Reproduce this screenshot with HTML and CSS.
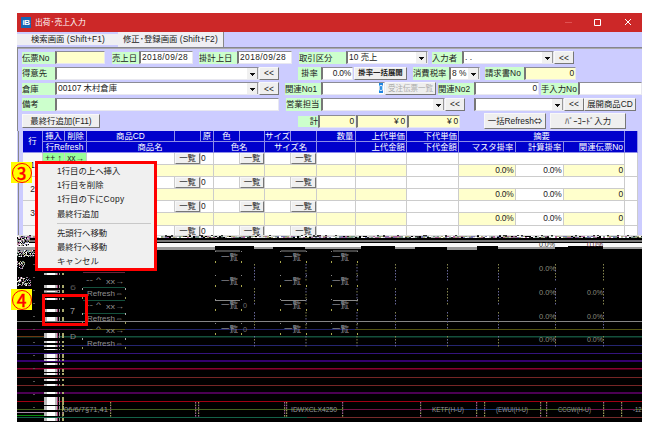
FILE: index.html
```html
<!DOCTYPE html>
<html lang="ja">
<head>
<meta charset="utf-8">
<title>出荷･売上入力</title>
<link rel="stylesheet" href="styles.css">
</head>
<body>
<main class="window">
  <header class="titlebar">
    <span class="logo">iB</span><span class="title">出荷･売上入力</span>
    <svg class="controls" width="72" height="19" viewBox="0 0 72 19"><path d="M0 9.5h7" stroke="#e05252"/><path d="M29.5 6.5h6v6h-6zM60 6l6 6M66 6l-6 6" fill="none" stroke="#fff"/></svg>
  </header>
  <nav class="tabs"><span class="tab">検索画面 <i>(Shift+F1)</i></span><span class="tab active">修正･登録画面 <i>(Shift+F2)</i></span></nav>
  <section class="form">
    <div class="row r1">
      <label>伝票No</label><b class="field yellow"></b><label>売上日</label><b class="field date">2018/09/28</b><label>掛計上日</label><b class="field date">2018/09/28</b><label>取引区分</label><b class="field select">10 売上</b><label>入力者</label><b class="field select">. .</b><button>&lt;&lt;</button>
    </div>
    <div class="row r2">
      <label>得意先</label><b class="field select"></b><button>&lt;&lt;</button><label>掛率</label><b class="field num">0.0%</b><button class="tiny">掛率一括展開</button><label>消費税率</label><b class="field select">8 %</b><label>請求書No</label><b class="field yellow num">0</b>
    </div>
    <div class="row r3">
      <label>倉庫</label><b class="field select">00107 木村倉庫</b><button>&lt;&lt;</button><label>関連No1</label><b class="field num"><mark>0</mark></b><button class="disabled">受注伝票一覧</button><label>関連No2</label><b class="field num">0</b><label>手入力No</label><b class="field"></b>
    </div>
    <div class="row r4">
      <label>備考</label><b class="field"></b><label>営業担当</label><b class="field select"></b><button>&lt;&lt;</button><b class="field select"></b><button>&lt;&lt;</button><button>展開商品CD</button>
    </div>
    <div class="row r5">
      <button class="low">最終行追加(F11)</button><label class="sum">計</label><b class="field yellow num">0</b><b class="field yellow num">¥ 0</b><b class="field yellow num">¥ 0</b><button class="tall">一括Refresh<i class="arrow">⇔</i></button><button class="tall">ﾊﾞｰｺｰﾄﾞ入力</button>
    </div>
  </section>
  <section class="table">
    <div class="thead">
      <span class="line-no">行</span><span>挿入</span><span>削除</span><span>商品CD</span><span></span><span>原</span><span>色</span><span></span><span>サイズ</span><span></span><span class="end">数量</span><span class="end">上代単価</span><span class="end">下代単価</span><span class="w3">摘要</span><span class="edge"></span>
      <span class="w2">行Refresh</span><span class="w3">商品名</span><span class="w2">色名</span><span class="w2">サイズ名</span><span></span><span class="end">上代金額</span><span class="end">下代金額</span><span class="end">マスタ掛率</span><span class="end">計算掛率</span><span class="end">関連伝票No</span>
    </div>
    <div class="tbody" id="lines"></div>
  </section>
  <svg class="noise" id="noise" width="625" height="187" viewBox="17 235 625 187"></svg>
</main>
<aside class="menu"><p>1行目の上へ挿入</p><p>1行目を削除</p><p>1行目の下に<i class="copy">Copy</i></p><p>最終行追加</p><hr><p>先頭行へ移動</p><p>最終行へ移動</p><p>キャンセル</p></aside>
<div class="callout"></div>
<div class="badge three"><span>3</span></div>
<div class="badge four"><span>4</span></div>
<script src="script.js"></script>
</body>
</html>
```
FILE: styles.css
```css
*{box-sizing:border-box}
body{margin:0;width:653px;height:432px;overflow:hidden;position:relative;background:#fff;color:#222;font:8.4px/10px "Liberation Sans","Noto Sans CJK JP",sans-serif}
i,b{font-style:normal;font-weight:400}
.window{width:625px;height:409px;margin:13px 0 0 17px;background:#ccf;overflow:hidden;display:flex;flex-direction:column}
.titlebar{height:19px;flex:none;background:#cc2828;color:#fff;display:flex;align-items:center;font-size:7.8px}
.logo{width:10px;height:11px;background:#1767b5;font:bold 8px/11px "Liberation Sans",sans-serif;text-align:center;margin:0 4px 0 4px;letter-spacing:-.4px}
.controls{margin-left:auto;margin-right:5px}
.tabs{height:15px;flex:none;display:flex;align-items:center}
.tab{width:101px;height:11px;background:#efeff3;padding-left:14px;line-height:11px;white-space:pre}
.tab i{letter-spacing:.1px}
.tab.active{width:106px;height:15px;line-height:14px;padding-left:5px;border-right:1px solid #888}
.form{height:84px;flex:none;border-top:1px solid #85858f;border-left:1px solid #888;padding:3px 0 0 4px;display:flex;flex-direction:column;gap:2px;box-shadow:inset 0 1px #aaa}
.row{height:13.5px;flex:none;display:grid;align-items:center}
.row>*{white-space:nowrap;overflow:hidden}
label{height:12.5px;line-height:12px;background:#cfc}
.r1{grid-template-columns:33px 50px 34px 54px 44px 55px 54px 82px 34px 92px 20px}
.r1>:nth-child(3){margin-left:7px}.r1>:nth-child(5){margin-left:6px}.r1>:nth-child(7){margin-left:7px}.r1>:nth-child(9){margin-left:4px}
.r2{grid-template-columns:33px 204px 20px 42px 32px 54px 42px 31px 44px 52px}
.r2>:nth-child(4){margin-left:19px;text-align:center}.r2>:nth-child(6){margin-left:1px}.r2>:nth-child(7){margin-left:6px}.r2>:nth-child(9){margin-left:5px}
.r3{grid-template-columns:33px 204px 20px 42px 64px 51px 38px 65px 39px 64px}
.r3>:nth-child(4){margin-left:6px}.r3>:nth-child(7),.r3>:nth-child(9){margin-left:2px}
.r4{grid-template-columns:33px 224px 42px 124px 20px 99px 20px 52px}
.r4>:nth-child(3){margin-left:7px}.r4>:nth-child(6){margin-left:9px}
.r5{grid-template-columns:78px 218px 38px 51px 53px 86px 80px;height:16px;margin-top:0}
.r5 .sum{justify-self:end;width:20px;text-align:right;height:11px;line-height:11px}
.r5 .low{height:13.5px}
.r5 .tall{height:16px;margin-left:24px}.r5 .tall:last-child{margin-left:4px}
.arrow{font-family:"Noto Sans CJK JP",sans-serif;line-height:8px}
.copy{letter-spacing:.4px}
.field{height:13px;background:#fff;border:1px solid #e8e8f0;border-top-color:#8c8c96;border-left:2px solid #777;padding-left:1px;line-height:11px}
.yellow{background:#ffc}
.date{letter-spacing:.42px}
.num{text-align:right;padding-right:1px;letter-spacing:-.2px}
mark{background:#2085e0;color:#fff}
.select{display:flex;justify-content:space-between}
.select::after{content:"";width:10px;height:11px;flex:none;margin-left:auto;background:linear-gradient(#111,#111) 3px 5px/5px 1px no-repeat,linear-gradient(#111,#111) 4px 6px/3px 1px no-repeat,linear-gradient(#111,#111) 5px 7px/1px 1px no-repeat,#f0f0f0;border-right:1px solid #999;border-bottom:1px solid #999}
button{height:13px;padding:0;border:1px solid #f8f8f8;border-right-color:#777;border-bottom-color:#777;background:#efefef;color:#222;font:inherit;line-height:10px;text-align:center}
.tiny{font-size:7.4px;font-weight:700}
.disabled{color:#aaa;font-size:7.5px}
.table{height:103.5px;flex:none;margin-left:1px;border-left:1px solid #888;padding-left:4px;overflow:hidden}
.thead,.line{display:grid;grid-template-columns:20px 22px 22px 88px 26px 13px 26px 25px 26px 26px 38.5px 51.5px 52px 56.5px 48px 61.5px 13px}
.thead{width:615px;background:#0000cc;color:#fff;grid-template-rows:11px 11px}
.thead span{border-right:1px solid #8e8ee8;border-bottom:1px solid #8e8ee8;text-align:center;line-height:10px;white-space:nowrap;overflow:hidden}
.thead .line-no,.thead .edge{grid-row:span 2}
.thead .line-no{line-height:21px}
.thead .end{text-align:right;padding-right:1px}
.thead .w2,.line .w2{grid-column:span 2}.thead .w3,.line .w3{grid-column:span 3}
.line{width:615px;grid-template-rows:12.1px 12.1px;background:#fff}
.line>span{border-right:1px solid #ccc;border-bottom:1px solid #ccc;line-height:11px;overflow:hidden}
.line .line-no,.line .edge{grid-row:span 2}
.line .line-no{background:#f7f7f7;line-height:25px;text-align:center}
.line .green{background:#9f9;text-align:center;white-space:nowrap}
.line button{width:100%;height:11px;display:block;line-height:9px}
.line .y{background:#ffc}
.line .end{text-align:right;padding-right:1px;letter-spacing:-.2px}
.noise{display:block;flex:none;background:#000}
.noise text{font-family:"Liberation Sans","Noto Sans CJK JP",sans-serif}
.menu{position:absolute;left:35px;top:161px;width:122px;height:110px;border:3px solid #f00;background:#f0f0f0;padding-left:19px;color:#222}
.menu p{margin:0;height:14.2px;line-height:14.2px;white-space:nowrap}
.menu hr{margin:2px 3px 2px 0;border:0;border-top:1px solid #c8c8c8;height:1px}
.callout{position:absolute;left:42px;top:294px;width:46px;height:32px;border:3px solid #f00}
.badge{position:absolute;left:11px;width:21px;height:21px;background:#ff0;display:grid;place-items:center}
.three{top:162px}.four{top:289px}
.badge span{width:20px;height:20px;border:1.5px solid #f00;border-radius:50%;color:#f00;font:500 17px/17px "Noto Sans CJK JP",sans-serif;-webkit-text-stroke:.3px #f00;text-align:center}
```
FILE: script.js
```js
const lines = document.getElementById('lines');
for (let n = 1; n <= 4; n++) {
  const list = '<span><button>一覧</button></span>';
  lines.insertAdjacentHTML('beforeend', `<div class="line"><span class="line-no">${n < 4 ? n : ''}</span><span class="green">++ ↑</span><span class="green">xx→</span><span></span>${list}<span>0</span><span></span>${list}<span></span>${list}<span></span><span></span><span></span><span class="w3"></span><span class="edge"></span><span class="w2 y"></span><span class="w3 y"></span><span class="w2 y"></span><span class="w2 y"></span><span class="y"></span><span class="y"></span><span></span>${n < 4 ? '<span class="y end">0.0%</span><span class="end">0.0%</span><span class="y end">0</span>' : ''}</div>`);
}

let seed = 7;
const rnd = () => (seed = (seed * 16807) % 2147483647) / 2147483647;
const out = [];
const rect = (x, y, w, h, c) => out.push(`<rect x="${x}" y="${y}" width="${w}" height="${h}" fill="${c}"/>`);
const text = (x, y, s, w, c = '#96969c', size = 8) => out.push(`<text x="${x}" y="${y}" font-size="${size}" fill="${c}" textLength="${w}" lengthAdjust="spacingAndGlyphs">${s}</text>`);
const tones = ['#fff', '#bbb', '#333', '#000', '#77a', '#798', '#a69', '#ddd', '#aa7'];
const tone = () => tones[Math.floor(rnd() * tones.length)];

// Broken band at the top edge
rect(17, 235, 625, 1, '#ddd');
for (let x = 17; x < 642; x += 2) {
  rect(x, 236, 2, 1, tone());
  rect(x, 237, 2, 1, tone());
  if (rnd() > .8) rect(x, 235, 2, 1, '#333');
}
rect(17, 240, 625, 2, '#777');
rect(17, 243, 625, 4, '#f8f8f8');
[[17, 53, 4], [157, 215, 2], [254, 273, 1], [305, 361, 1], [395, 415, 1], [447, 477, 2], [498, 555, 1], [603, 642, 1]].forEach(([a, b, h]) => rect(a, 247, b - a, h + 1, '#999'));
[[215, 254], [361, 395], [477, 498], [568, 603]].forEach(([a, b]) => rect(a, 246, b - a, 2, '#000'));
text(539, 247, '0.0%', 16, '#333');
text(587, 247, '0.0%', 16, '#523');

// Residue at the left edge
[[237, 246, 30], [250, 257, 35], [261, 269, 25], [277, 286, 31]].forEach(([a, b, r]) => {
  for (let y = a; y < b; y++) for (let x = 17; x < r; x++) if (rnd() > .35) rect(x, y, 1, 1, tone());
});

// Horizontal streaks
[[321, 1, '#858585'], [329, 1, '#555512'], [336, 1.5, '#14503c'], [345, 1, '#252570'], [353, 1, '#34147c'], [360, 2, '#34006d'], [368, 1.5, '#890030'], [377, 1, '#752525'], [385, 1, '#752525'], [392, 2, '#4b0052'], [401, 1, '#a00012'], [409, 1, '#46601d'], [417, 1, '#752a2a']].forEach(([y, h, c]) => rect(17, y, 625, h, c));
rect(17, 329, 70, 1, '#600044');
rect(125, 329, 230, 1, '#222468');
rect(17, 336, 35, 1, '#6b3812');
rect(343, 409, 90, 1, '#721044');
rect(450, 409, 70, 1, '#16397f');
rect(585, 409, 50, 1, '#72104c');
rect(17, 417, 290, 1, '#146148');
rect(17, 412, 28, 1, '#a588a5');
rect(17, 415, 28, 1, '#098b09');

// Barcode-like strip
[[273, 2], [285, 3], [290, 3], [298, 2], [309, 3], [317, 4], [323, 3], [333, 5], [341, 2], [345, 2], [349, 1], [354, 4], [359, 2], [363, 2], [369, 3], [373, 2], [379, 2], [384, 2], [392, 2], [397, 8], [406, 4], [412, 4], [418, 3]].forEach(([y, h]) => {
  rect(44, y, 14, h, '#bbb');
  rect(47, y, 8, h, '#fff');
  rect(57, y, 1, h, '#a83a75');
  rect(59, y, 1, h, '#999');
  rect(62, y, 2, h, '#a9a96d');
});
for (let y = 290; y < 298; y += 2) rect(44, y, 15, 1, '#777');

// Dotted column borders
[254, 305.5, 356.5, 395, 447, 498, 555, 603].forEach(x => {
  for (let y = 261; y < 347; y += 3) if (y % 24 < 16) rect(x, y, 1, 1.5, rnd() > .5 ? '#68689a' : '#85854f');
});
[257, 281, 305, 329].forEach(y => {
  [[221, 214], [284, 279], [332, 330]].forEach(([x, b]) => {
    text(x, y + 3, '一覧', 17, '#96969c', 8);
    [b, b + 26].forEach(v => { rect(v + 1, y + 4, 1, 2, '#aaa84d'); rect(v + 1, y - 6, 1, 1, '#888'); });
  });
  if (y > 300) text(243, y + 3, '0', 4, '#727272', 7);
});
[[214, 250.5], [280, 250.5], [332, 250.5], [214, 300], [280, 300], [332, 300]].forEach(([x, y]) => rect(x + 1, y, 25, 1, '#888'));
[268, 292, 316, 339].forEach((y, i) => {
  text(539, y + 3, '0.0%', 17, '#8a8a7c');
  if (i) text(587, y + 3, '0.0%', 16, '#8a8a7c');
});
[281, 306, 330].forEach(y => {
  text(86, y + 1, '-- ^', 15, '#909090');
  text(106, y + 3, 'xx→', 18, '#909090');
});
[293, 318, 343].forEach(y => {
  text(87, y + 3, 'Refresh⇔', 36, '#909090');
  [82, 125].forEach(x => { rect(x, y - 5, 1, 2, '#aaa'); rect(x, y + 4, 1, 2, '#995'); });
});
rect(83, 272, 42, 1, '#702037');
[287, 300, 313].forEach(y => rect(83, y, 42, 1, '#14503c'));
text(70, 290, '6', 6, '#555');
text(70, 314, '7', 5, '#999', 9);
text(70, 339, 'D', 6, '#888');
for (let y = 251; y < 415; y += 13) rect(33, y, 2, 1, '#555');

// Footer remnants
text(64, 412, '06/6/7§71,41', 44);
text(291, 412, 'IDWXCLX4250', 46);
text(432, 412, 'KETF(H-U)', 32);
text(496, 412, '(EWUI(H-U)', 32);
text(558, 412, 'CCGW(H-U)', 33);
text(633, 412, '-12', 8.5);
[62, 110, 195, 198, 284, 286, 342, 420, 476, 484, 540, 546, 603, 621].forEach(x => {
  for (let y = 402; y < 417; y += 2.6) rect(x, y, 1.2, 1.6, rnd() > .6 ? '#9c5f91' : '#999958');
});
document.getElementById('noise').innerHTML = out.join('');
```
